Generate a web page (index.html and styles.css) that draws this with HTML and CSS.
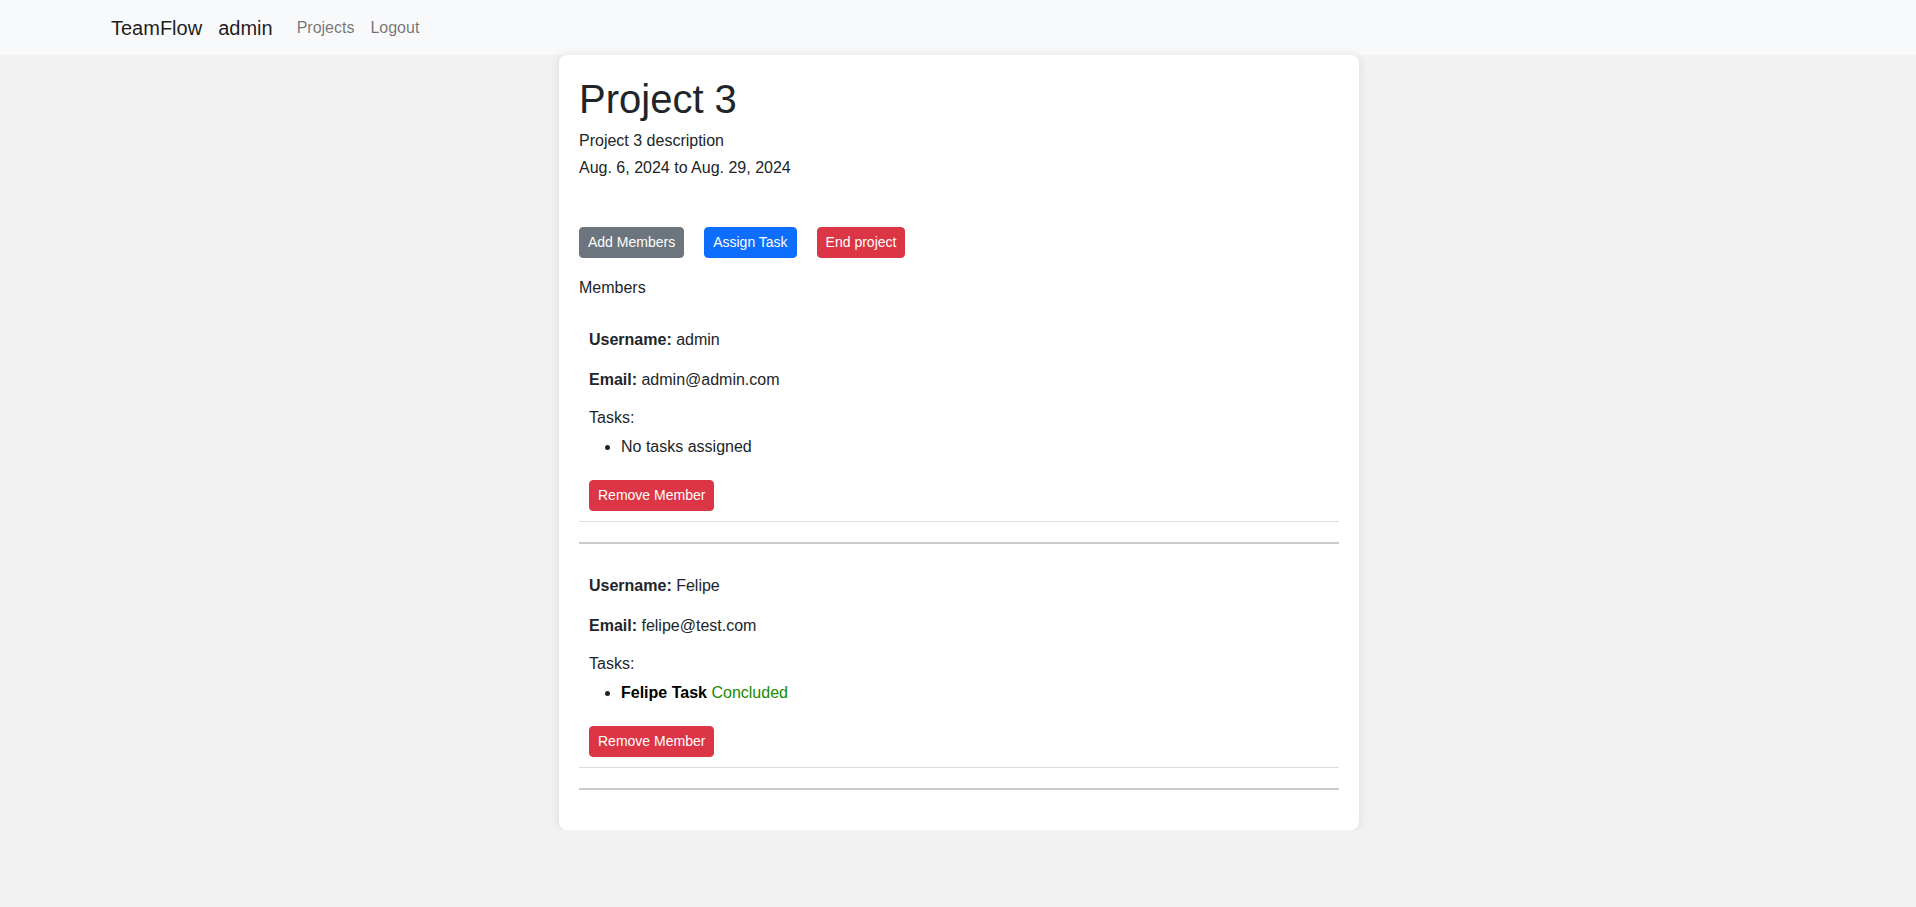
FILE: index.html
```html
<!DOCTYPE html>
<html lang="en">
<head>
<meta charset="utf-8">
<title>TeamFlow - Project 3</title>
<link rel="stylesheet" href="styles.css">
</head>
<body>
<nav class="navbar">
  <a class="brand" href="#">TeamFlow</a>
  <span class="brand">admin</span>
  <a class="nav-link" href="#">Projects</a>
  <a class="nav-link" href="#">Logout</a>
</nav>
<main class="card">
  <h1 class="title">Project 3</h1>
  <p class="desc">Project 3 description</p>
  <p class="dates">Aug. 6, 2024 to Aug. 29, 2024</p>
  <div class="actions">
    <button class="btn btn-secondary">Add Members</button>
    <button class="btn btn-primary">Assign Task</button>
    <button class="btn btn-danger">End project</button>
  </div>
  <p class="members-label">Members</p>

  <div class="member">
    <p class="m-user"><strong>Username:</strong> admin</p>
    <p class="m-email"><strong>Email:</strong> admin@admin.com</p>
    <p class="m-tasks">Tasks:</p>
    <ul class="task-list">
      <li>No tasks assigned</li>
    </ul>
    <button class="btn btn-danger">Remove Member</button>
  </div>
  <hr class="sep">

  <div class="member">
    <p class="m-user"><strong>Username:</strong> Felipe</p>
    <p class="m-email"><strong>Email:</strong> felipe@test.com</p>
    <p class="m-tasks">Tasks:</p>
    <ul class="task-list">
      <li><strong class="task-name">Felipe Task</strong> <span class="status-done">Concluded</span></li>
    </ul>
    <button class="btn btn-danger">Remove Member</button>
  </div>
  <hr class="sep">
</main>
</body>
</html>
```
FILE: styles.css
```css
* { box-sizing: border-box; }

body {
  margin: 0;
  background: #f2f2f2;
  font-family: "Liberation Sans", Arial, sans-serif;
  font-size: 16px;
  line-height: 1.5;
  color: #212529;
}

.navbar {
  display: flex;
  align-items: center;
  height: 55px;
  padding-left: 111px;
  background: #f8f9fa;
}

.brand {
  font-size: 20px;
  line-height: 30px;
  color: rgba(0, 0, 0, 0.9);
  text-decoration: none;
  margin-right: 16px;
}

.nav-link {
  padding: 8px;
  color: rgba(0, 0, 0, 0.55);
  text-decoration: none;
}

.card {
  width: 800px;
  margin: 0 0 0 calc(50% - 399px);
  padding: 20px;
  background: #fff;
  border-radius: 8px;
  box-shadow: 0 0 10px rgba(0, 0, 0, 0.1);
}

.title {
  margin: 0 0 6px;
  font-size: 40px;
  font-weight: 500;
  line-height: 1.2;
}

.desc {
  margin: 0 0 3px;
}

.dates {
  margin: 0 0 47px;
}

.actions {
  display: flex;
  gap: 20px;
  margin-bottom: 18px;
}

.btn {
  display: inline-block;
  font-family: inherit;
  font-size: 14px;
  line-height: 21px;
  padding: 4px 8px;
  border: 1px solid transparent;
  border-radius: 4px;
  color: #fff;
  cursor: pointer;
}

.btn-secondary { background: #6c757d; border-color: #6c757d; }
.btn-primary { background: #0d6efd; border-color: #0d6efd; }
.btn-danger { background: #dc3545; border-color: #dc3545; }

.members-label {
  margin: 0 0 18px;
}

.member {
  padding: 10px 10px;
  border-bottom: 1px solid #dedede;
}

.member p { margin: 0; }
.member strong { font-weight: 700; }

.m-user { margin-bottom: 16px !important; }
.m-email { margin-bottom: 14px !important; }
.m-tasks { margin-bottom: 5px !important; }

.task-list {
  margin: 0 0 21px;
  padding-left: 32px;
}

.task-name { color: #000; }
.status-done { color: #198a00; }

.sep {
  margin: 20px 0;
  height: 2px;
  border: 0;
  background: #cbcbcb;
}
```
